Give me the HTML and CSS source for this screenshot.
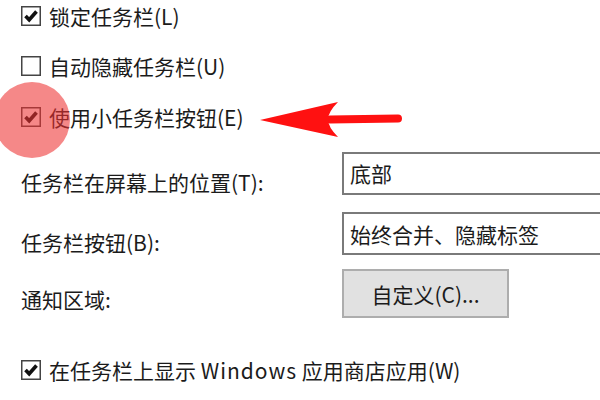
FILE: index.html
```html
<!DOCTYPE html>
<html lang="zh-CN">
<head>
<meta charset="utf-8">
<link rel="stylesheet" href="styles.css">
</head>
<body>
<div class="panel">
  <div class="check-row r1">
    <span class="box"><svg viewBox="0 0 18 18"><path d="M3.5 9 L7.2 12.8 L14.5 4.5" /></svg></span>
    <span class="txt">锁定任务栏(L)</span>
  </div>
  <div class="check-row r2">
    <span class="box"></span>
    <span class="txt">自动隐藏任务栏(U)</span>
  </div>
  <div class="check-row r3">
    <span class="box"><svg viewBox="0 0 18 18"><path d="M3.5 9 L7.2 12.8 L14.5 4.5" /></svg></span>
    <span class="txt">使用小任务栏按钮(E)</span>
  </div>

  <div class="grid">
    <div class="lbl l1">任务栏在屏幕上的位置(T):</div>
    <div class="select s1">底部</div>
    <div class="lbl l2">任务栏按钮(B):</div>
    <div class="select s2">始终合并、隐藏标签</div>
    <div class="lbl l3">通知区域:</div>
    <div class="btn">自定义(C)...</div>
  </div>

  <div class="check-row r4">
    <span class="box"><svg viewBox="0 0 18 18"><path d="M3.5 9 L7.2 12.8 L14.5 4.5" /></svg></span>
    <span class="txt">在任务栏上显示 <span class="latin">Windows</span> 应用商店应用(W)</span>
  </div>

  <div class="spot"></div>
  <svg class="arrow" viewBox="0 0 150 40" width="150" height="40">
    <path class="shaft" d="M70 17.5 L138 16.5" />
    <path class="head" d="M0 18 L78 0 Q68 10 68 17.5 Q68 25 78 35 Z" />
  </svg>
</div>
</body>
</html>
```
FILE: styles.css
```css
html, body {
  margin: 0;
  padding: 0;
  background: #fff;
}
body {
  width: 600px;
  height: 400px;
  overflow: hidden;
  font-family: "Noto Sans CJK SC", "Noto Sans", sans-serif;
  font-size: 21px;
  color: #1b1b1b;
}
.panel {
  position: relative;
  width: 600px;
  height: 400px;
  padding-left: 21px;
  box-sizing: border-box;
}
.check-row {
  display: flex;
  align-items: center;
  gap: 8px;
  height: 32px;
}
.r2 { margin-top: 18px; }
.r3 { margin-top: 19px; }
.box {
  width: 18px;
  height: 18px;
  border: 1px solid #444;
  background: #fff;
  flex: none;
  display: block;
  box-shadow: inset 0 0 0 0.5px #444;
}
.box svg {
  width: 18px;
  height: 18px;
  display: block;
}
.box path {
  fill: none;
  stroke: #111;
  stroke-width: 3.6;
  stroke-linecap: butt;
  stroke-linejoin: miter;
}
.txt {
  line-height: 26px;
  white-space: nowrap;
}
.latin {
  letter-spacing: 1px;
}
.grid {
  margin-top: 18px;
  display: grid;
  grid-template-columns: 321px 1fr;
  row-gap: 17px;
  align-items: center;
}
.lbl {
  line-height: 26px;
  white-space: nowrap;
}
.l1 { margin-top: 18px; }
.l2 { margin-top: 16px; }
.l3 { margin-top: 8px; }
.select {
  height: 43px;
  box-sizing: border-box;
  border: 2px solid #7a7a7a;
  border-right: none;
  margin-right: -20px;
  padding-left: 6px;
  display: flex;
  align-items: center;
  background: #fff;
}
.btn {
  width: 167px;
  height: 49px;
  box-sizing: border-box;
  border: 2px solid #adadad;
  background: #e1e1e1;
  display: flex;
  align-items: center;
  justify-content: center;
  margin-top: -3px;
}
.r4 {
  margin-top: 40px;
  height: 24px;
}
.spot {
  position: absolute;
  left: -6px;
  top: 82px;
  width: 76px;
  height: 76px;
  border-radius: 50%;
  background: rgba(238, 50, 50, 0.58);
}
.arrow {
  position: absolute;
  left: 260px;
  top: 102px;
}
.arrow .shaft {
  stroke: #f11;
  stroke-width: 8;
  stroke-linecap: round;
  fill: none;
}
.arrow .head {
  fill: #f11;
}
```
